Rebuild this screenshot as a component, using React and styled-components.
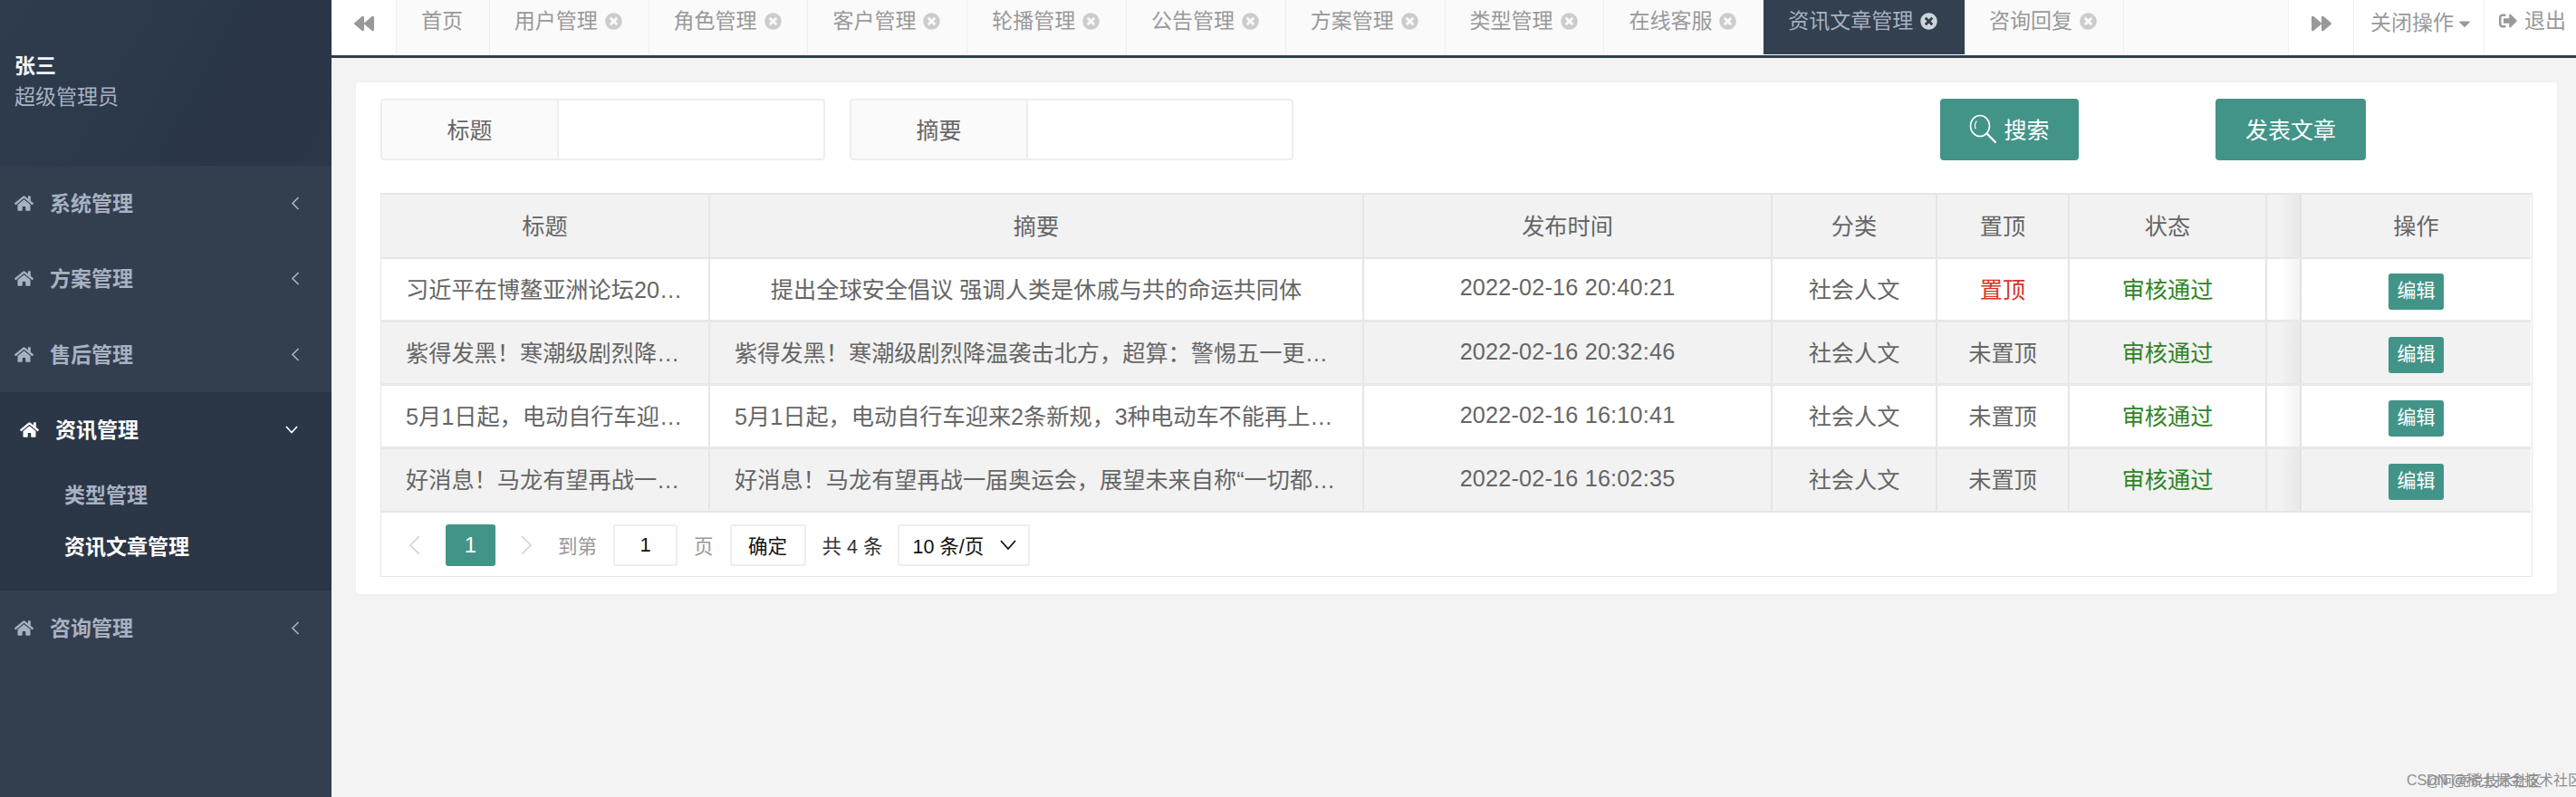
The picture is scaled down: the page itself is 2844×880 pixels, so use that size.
import React from 'react';
import styled, { createGlobalStyle } from 'styled-components';
import { FaHome, FaBackward, FaForward, FaTimesCircle, FaCaretDown, FaSignOutAlt } from 'react-icons/fa';

const Global = createGlobalStyle`
  html, body { margin: 0; padding: 0; background: #f3f3f4; }
  * { box-sizing: border-box; }
  body { font-family: "Liberation Sans", "Noto Sans CJK SC", sans-serif; }
`;

const Page = styled.div`
  display: flex; width: 2844px; height: 880px; overflow: hidden; position: relative; background: #f3f3f4;
`;
const Sidebar = styled.aside`
  flex: 0 0 366px; background: #333f4f; display: flex; flex-direction: column;
`;
const Profile = styled.div`
  height: 183px; padding: 56px 0 0 16px;
  background: linear-gradient(118deg, #2e3c4e 0%, #2c394b 45%, #2a3647 70%, #2c384a 100%);
`;
const UserName = styled.div`
  font-size: 23px; line-height: 34px; font-weight: 700; color: #f4f6f8;
`;
const UserRole = styled.div`
  font-size: 23px; line-height: 34px; color: #a7b1c2;
`;
const MenuRow = styled.div`
  height: ${p => p.$open ? '84px' : '83.33px'};
  display: flex; align-items: center;
  padding-left: ${p => p.$open ? '22px' : '16px'};
  padding-right: ${p => p.$open ? '37px' : '35px'};
  color: ${p => p.$open ? '#fff' : '#a7b1c2'};
  font-size: 23px; font-weight: 700;
`;
const MenuLabel = styled.span`
  margin-left: 18px; flex: 1; padding-bottom: 3px;
`;
const OpenGroup = styled.div`
  background: #2b3646; padding-bottom: 18px;
`;
const SubItem = styled.div`
  height: 57px; line-height: 55px; padding-left: 71px;
  font-size: 23px; font-weight: 700;
  color: ${p => p.$active ? '#fff' : '#a7b1c2'};
`;
const SubList = styled.div`
  padding-top: 3px;
`;
const Main = styled.main`
  flex: 1; min-width: 0; display: flex; flex-direction: column;
`;
const TabBar = styled.div`
  height: 64px; display: flex; background: #fff; border-bottom: 3px solid #2f3e4e;
`;
const ArrowBox = styled.div`
  flex: 0 0 ${p => p.$w}px; height: 61px; display: flex; align-items: center; justify-content: center;
  color: #999; font-size: 22px; background: #fff;
  border-left: ${p => p.$edge ? '1px solid #eee' : 'none'};
  padding-bottom: 9px;
`;
const Tab = styled.div`
  flex: 0 0 auto; height: 60px; padding: 0 28.8px 0 27px; display: flex; align-items: flex-start; gap: 8px;
  line-height: 46px; font-size: 23px;
  background: ${p => p.$active ? '#33404f' : '#fafafa'};
  color: ${p => p.$active ? '#a7b1c2' : '#999'};
  border-right: 1px solid ${p => p.$active ? '#33404f' : '#eee'};
  border-left: ${p => p.$first ? '1px solid #eee' : '0'};
`;
const CloseIcon = styled.span`
  display: flex; height: 46px; align-items: center; font-size: 19px;
  color: ${p => p.$active ? '#cfd3d8' : '#ccc'};
`;
const TabFill = styled.div`
  flex: 1; height: 60px; background: #fafafa;
`;
const ActionBox = styled.div`
  flex: 0 0 ${p => p.$w}px; height: 61px; background: #fff; border-left: 1px solid #eee;
  display: flex; align-items: flex-start; color: #999; font-size: 23px; line-height: ${p => p.$lh}px;
  padding-left: ${p => p.$pl}px;
`;
const ActionIcon = styled.span`
  display: flex; align-items: center; height: 46px; font-size: ${p => p.$size}px; margin: ${p => p.$m};
`;
const Panel = styled.section`
  margin: 27px 21px 0 27px; padding: 18px 27px 19px 27px; background: #fff; border-radius: 3px;
  box-shadow: 0 1px 2px rgba(0,0,0,.03);
`;
const SearchRow = styled.div`
  display: flex; height: 68px; margin-bottom: 36px;
`;
const Field = styled.div`
  flex: 0 0 ${p => p.$w}px; margin-right: ${p => p.$mr}px; display: flex; border: 2px solid #eee; border-radius: 4px; overflow: hidden;
`;
const FieldLabel = styled.label`
  flex: 0 0 195px; background: #fafafa; border-right: 2px solid #eee; color: #666;
  font-size: 25px; display: flex; align-items: center; justify-content: center; padding-bottom: 3px;
`;
const FieldInput = styled.input`
  flex: 1; min-width: 0; border: 0; outline: 0; background: #fff;
`;
const PrimaryButton = styled.button`
  flex: 0 0 ${p => p.$w}px; margin-left: ${p => p.$ml}px; border: 0; border-radius: 4px; background: #429488; color: #fff;
  font: inherit; font-size: 25px; display: flex; align-items: center; justify-content: center; gap: 8px; padding: 0 0 3px;
`;
const TableFrame = styled.div`
  border: 1px solid #e6e6e6; border-top-width: 2px; height: 424px;
`;
const Table = styled.table`
  width: 2373px; table-layout: fixed; border-collapse: collapse; font-size: 25.2px; color: #666;
`;
const HeadRow = styled.tr`
  height: 69.5px; background: #f2f2f2;
`;
const BodyRow = styled.tr`
  height: 70px; background: ${p => p.$alt ? '#f2f2f2' : '#fff'};
`;
const Th = styled.th`
  font-weight: 400; text-align: center; padding: 0 0 3px; border-right: 2px solid #e6e6e6; border-bottom: 2px solid #e6e6e6;
`;
const Td = styled.td`
  text-align: center; padding: 0 ${p => p.$pad || 0}px 3px; border-right: 2px solid #e6e6e6; border-bottom: 3px solid #e8e8e8;
  white-space: nowrap; overflow: hidden; text-overflow: ellipsis;
  letter-spacing: ${p => p.$ls || 0}px;
  color: ${p => p.$color || '#666'};
  tr:last-child & { border-bottom: 2px solid #e6e6e6; }
`;
const ShadowTh = styled(Th)`
  border-right: 2px solid #e2e2e2;
  background: linear-gradient(90deg, #f2f2f2 0%, #f2f2f2 40%, #e8e8e8 100%);
`;
const ShadowTd = styled(Td)`
  border-right: 2px solid #e2e2e2;
  background: linear-gradient(90deg, ${p => p.$alt ? '#f2f2f2' : '#fff'} 40%, ${p => p.$alt ? '#e8e8e8' : '#f3f3f3'} 100%);
`;
const OpTd = styled(Td)`
  border-right: 0;
`;
const OpTh = styled(Th)`
  border-right: 0;
`;
const EditButton = styled.span`
  display: inline-block; width: 61px; height: 40px; line-height: 38px; margin-top: 8px; background: #429488; color: #fff; border-radius: 3px;
  font-size: 21px; text-align: center; vertical-align: middle;
`;
const Pager = styled.div`
  height: 72px; display: flex; align-items: center; padding-left: 30px; color: #333;
`;
const PagerArrow = styled.svg`
  width: 13px; height: 22px; margin: ${p => p.$m};
`;
const PageNum = styled.div`
  width: 55px; height: 46px; background: #429488; color: #fff; border-radius: 3px; font-size: 24px;
  display: flex; align-items: center; justify-content: center;
`;
const PagerText = styled.span`
  font-size: 21.5px; color: ${p => p.$dark ? '#333' : '#999'}; margin: ${p => p.$m};
  white-space: nowrap;
`;
const PagerInput = styled.input`
  width: 71px; height: 46px; border: 2px solid #eee; border-radius: 3px; text-align: center; font: inherit; font-size: 22px; color: #111; outline: 0; background: #fff; padding: 0;
`;
const PagerBtn = styled.button`
  width: 84px; height: 46px; border: 2px solid #eee; border-radius: 3px; background: #fff; font: inherit; font-size: 21.5px; color: #111; padding: 0;
`;
const PagerSelect = styled.div`
  width: 146px; height: 46px; border: 2px solid #eee; border-radius: 3px; background: #fff; display: flex; align-items: center; justify-content: space-between; padding: 0 13px 0 14px; font-size: 21.5px; color: #111;
`;
const Watermark = styled.div`
  position: absolute; left: ${p => p.$x}px; top: ${p => p.$y}px; font-size: 16px; line-height: 20px; color: #8f8f8f; white-space: nowrap;
`;

const tabs = ['用户管理','角色管理','客户管理','轮播管理','公告管理','方案管理','类型管理','在线客服'];
const rows = [
  ['习近平在博鳌亚洲论坛2022年年会开幕式上的主旨演讲','提出全球安全倡议 强调人类是休戚与共的命运共同体','2022-02-16 20:40:21','置顶'],
  ['紫得发黑\uFF01寒潮级剧烈降温袭击北方\uFF0C超算\uFF1A警惕五一更冷','紫得发黑\uFF01寒潮级剧烈降温袭击北方\uFF0C超算\uFF1A警惕五一更冷的天气即将到来','2022-02-16 20:32:46','未置顶'],
  ['5月1日起\uFF0C电动自行车迎来2条新规\uFF0C3种电动车不能再上路','5月1日起\uFF0C电动自行车迎来2条新规\uFF0C3种电动车不能再上路行驶了\uFF0C车主注意','2022-02-16 16:10:41','未置顶'],
  ['好消息\uFF01马龙有望再战一届奥运会\uFF0C展望未来自称“一切都有可能”','好消息\uFF01马龙有望再战一届奥运会\uFF0C展望未来自称“一切都有可能”','2022-02-16 16:02:35','未置顶'],
];
const colWidths = [362,722,451,182,146,218,38,254];

function SearchGlyph() {
  return (
    <svg width="30" height="34" viewBox="0 0 30 34" fill="none" stroke="#fff" strokeWidth="1.6" strokeLinecap="round">
      <ellipse cx="12" cy="14" rx="10.5" ry="11.5" />
      <path d="M20 23l9 9" strokeWidth="2.4" />
      <path d="M7 17c-1-3-.6-5.5 1-8" strokeWidth="1.2" />
    </svg>
  );
}

function ChevronLeft() {
  return (
    <svg width="10" height="15" viewBox="0 0 10 15" fill="none" stroke="currentColor" strokeWidth="1.7"><path d="M8.5 1L2 7.5 8.5 14" /></svg>
  );
}

function ChevronDown() {
  return (
    <svg width="14" height="9" viewBox="0 0 14 9" fill="none" stroke="currentColor" strokeWidth="1.7"><path d="M1 1l6 6.5L13 1" /></svg>
  );
}

function MenuItem({ label }) {
  return (
    <MenuRow>
      <FaHome size={21} />
      <MenuLabel>{label}</MenuLabel>
      <ChevronLeft />
    </MenuRow>
  );
}

export default function App() {
  return (
    <Page>
      <Global />
      <Sidebar>
        <Profile>
          <UserName>张三</UserName>
          <UserRole>超级管理员</UserRole>
        </Profile>
        <MenuItem label="系统管理" />
        <MenuItem label="方案管理" />
        <MenuItem label="售后管理" />
        <OpenGroup>
          <MenuRow $open>
            <FaHome size={21} />
            <MenuLabel>资讯管理</MenuLabel>
            <ChevronDown />
          </MenuRow>
          <SubList>
            <SubItem>类型管理</SubItem>
            <SubItem $active>资讯文章管理</SubItem>
          </SubList>
        </OpenGroup>
        <MenuItem label="咨询管理" />
      </Sidebar>
      <Main>
        <TabBar>
          <ArrowBox $w={71}><FaBackward /></ArrowBox>
          <Tab $first>首页</Tab>
          {tabs.map(t => (
            <Tab key={t}>{t}<CloseIcon><FaTimesCircle /></CloseIcon></Tab>
          ))}
          <Tab $active>资讯文章管理<CloseIcon $active><FaTimesCircle /></CloseIcon></Tab>
          <Tab>咨询回复<CloseIcon><FaTimesCircle /></CloseIcon></Tab>
          <TabFill />
          <ArrowBox $w={72} $edge><FaForward /></ArrowBox>
          <ActionBox $w={144} $pl={18} $lh={51}>
            关闭操作
            <ActionIcon $size={20} $m="3px 0 0 2px"><FaCaretDown /></ActionIcon>
          </ActionBox>
          <ActionBox $w={102} $pl={16} $lh={46}>
            <ActionIcon $size={20} $m="0 8px 0 0"><FaSignOutAlt /></ActionIcon>
            退出
          </ActionBox>
        </TabBar>
        <Panel>
          <SearchRow>
            <Field $w={491} $mr={27}>
              <FieldLabel>标题</FieldLabel>
              <FieldInput />
            </Field>
            <Field $w={490} $mr={0}>
              <FieldLabel>摘要</FieldLabel>
              <FieldInput />
            </Field>
            <PrimaryButton $w={153} $ml={714}><SearchGlyph />搜索</PrimaryButton>
            <PrimaryButton $w={166} $ml={151}>发表文章</PrimaryButton>
          </SearchRow>
          <TableFrame>
            <Table>
              <colgroup>
                {colWidths.map((w, i) => <col key={i} width={w} />)}
              </colgroup>
              <thead>
                <HeadRow>
                  <Th>标题</Th><Th>摘要</Th><Th>发布时间</Th><Th>分类</Th><Th>置顶</Th><Th>状态</Th><ShadowTh /><OpTh>操作</OpTh>
                </HeadRow>
              </thead>
              <tbody>
                {rows.map((r, i) => (
                  <BodyRow key={i} $alt={i % 2 === 1}>
                    <Td $pad={27}>{r[0]}</Td>
                    <Td $pad={27}>{r[1]}</Td>
                    <Td $ls={0.2}>{r[2]}</Td>
                    <Td>社会人文</Td>
                    <Td $color={r[3] === '置顶' ? '#d5332a' : '#666'}>{r[3]}</Td>
                    <Td $color="#2f8424">审核通过</Td>
                    <ShadowTd $alt={i % 2 === 1} />
                    <OpTd><EditButton>编辑</EditButton></OpTd>
                  </BodyRow>
                ))}
              </tbody>
            </Table>
            <Pager>
              <PagerArrow $m="0 28px 0 0" viewBox="0 0 13 22" fill="none" stroke="#d2d2d2" strokeWidth="1.6"><path d="M12 1L2 11l10 10" /></PagerArrow>
              <PageNum>1</PageNum>
              <PagerArrow $m="0 28px 0 28px" viewBox="0 0 13 22" fill="none" stroke="#d2d2d2" strokeWidth="1.6"><path d="M1 1l10 10L1 21" /></PagerArrow>
              <PagerText $m="0 18px 0 0">到第</PagerText>
              <PagerInput defaultValue="1" />
              <PagerText $m="0 18px">页</PagerText>
              <PagerBtn>确定</PagerBtn>
              <PagerText $dark $m="0 17px 0 18px">共 4 条</PagerText>
              <PagerSelect>
                10 条/页
                <svg width="18" height="12" viewBox="0 0 18 12" fill="none" stroke="#111" strokeWidth="1.8"><path d="M1 1l8 9 8-9" /></svg>
              </PagerSelect>
            </Pager>
          </TableFrame>
        </Panel>
      </Main>
      <Watermark $x={2657} $y={852}>CSDN @稀土掘金技术社区</Watermark>
      <Watermark $x={2678} $y={853}>@阿亮说技术社区</Watermark>
    </Page>
  );
}
